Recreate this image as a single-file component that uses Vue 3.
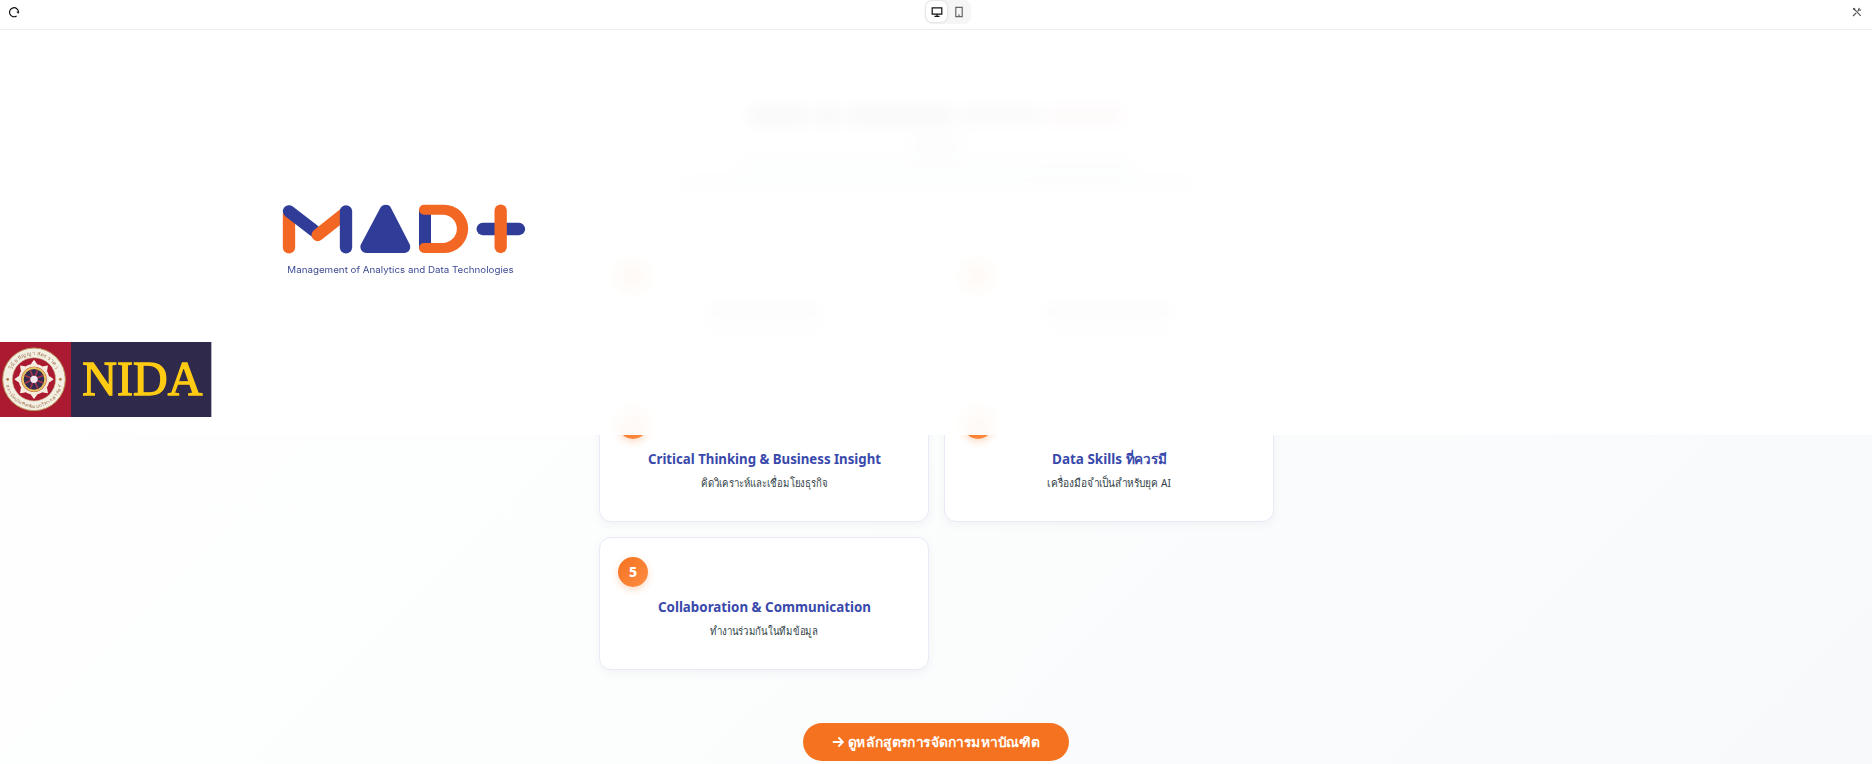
<script setup>
const cards = [
  { n: 1, bars: [120, 118] },
  { n: 2, bars: [136, 124] },
  { n: 3, title: 'Critical Thinking & Business Insight', tw: 233, sub: 'คิดวิเคราะห์และเชื่อมโยงธุรกิจ', sw: 127 },
  { n: 4, title: 'Data Skills ที่ควรมี', tw: 115, sub: 'เครื่องมือจำเป็นสำหรับยุค AI', sw: 124 },
  { n: 5, title: 'Collaboration & Communication', tw: 213, sub: 'ทำงานร่วมกันในทีมข้อมูล', sw: 108 },
]
const spokes = [0, 45, 90, 135, 180, 225, 270, 315]
</script>

<template>
  <div class="page">
    <header class="toolbar">
      <svg class="reload" width="12" height="12" viewBox="0 0 12 12">
        <path d="M8.6 9.9A4.5 4.5 0 1 1 10.5 6.2" />
        <path class="tip" d="M8.2 5.8h3.2l-1 2z" />
      </svg>
      <div class="switch">
        <span class="seg active">
          <svg width="12" height="12" viewBox="0 0 12 12">
            <path d="M1.2 1.8h9.6v6.4H1.2zM6 8.2v2M3.5 10.4h5" />
          </svg>
        </span>
        <span class="seg phone">
          <svg width="12" height="12" viewBox="0 0 12 12">
            <path d="M2.8 1.3h6.4v9.4H2.8zM5.2 9.1h1.6" />
          </svg>
        </span>
      </div>
      <svg class="tools" width="10" height="10" viewBox="0 0 10 10">
        <path d="M1.3 1.2 8.7 8.8M1 9 4.2 5.8M5.7 4.2 7.4 2.6M7.2.9 6.7 2.8 9 3.1" />
        <path class="head" d="M.7 2.1 2.1.8 3.5 2.1 2.3 3.4z" />
      </svg>
    </header>

    <main class="section">
      <div class="intro">
        <div class="headline"><i class="w1"></i><i class="w2"></i><i class="w3"></i><i class="w4"></i><i class="w5"></i></div>
        <i class="line l1"></i>
        <i class="line l2"></i>
        <i class="line l3"></i>
      </div>
      <div class="grid">
        <article v-for="c in cards" :key="c.n" class="card">
          <span class="badge">{{ c.n }}</span>
          <template v-if="c.title">
            <svg class="title" :width="c.tw" height="24"><text x="0" y="17" :textLength="c.tw" lengthAdjust="spacingAndGlyphs">{{ c.title }}</text></svg>
            <svg class="sub" :width="c.sw" height="22"><text x="0" y="16" :textLength="c.sw" lengthAdjust="spacingAndGlyphs">{{ c.sub }}</text></svg>
          </template>
          <template v-else>
            <i class="bar strong" :style="{ width: c.bars[0] + 'px' }"></i>
            <i class="bar" :style="{ width: c.bars[1] + 'px' }"></i>
          </template>
        </article>
      </div>
      <a class="cta">
        <svg width="12" height="12" viewBox="0 0 12 12"><path d="M.8 6h10M6.4 1.5 10.9 6 6.4 10.5" /></svg>
        <svg class="label" width="191" height="26"><text x="0" y="18" textLength="191" lengthAdjust="spacingAndGlyphs">ดูหลักสูตรการจัดการมหาบัณฑิต</text></svg>
      </a>
    </main>

    <div class="veil">
      <svg class="mad" width="290" height="100" viewBox="0 0 870 300">
        <g fill="none" stroke-width="37" stroke-linecap="round">
          <path stroke="#f26724" d="M87 172V72" />
          <path stroke="#2f3c98" d="M87 64 162 122" />
          <path stroke="#f26724" d="M173 135 250 74" />
          <path stroke="#2f3c98" d="M258 172V64" />
          <path stroke="#2f3c98" d="M668 117H777" />
          <path stroke="#f26724" d="M722 62V171" />
        </g>
        <path d="M377 62 433 171H319z" fill="#2f3c98" stroke="#2f3c98" stroke-width="36" stroke-linejoin="round" />
        <path d="M477 60h36v115h-36z" fill="#2f3c98" />
        <path d="M492 44H552A72.500 72.500 0 0 1 552 189H492A15 15 0 0 1 492 159H548A42.500 42.500 0 0 0 548 74H492A15 15 0 0 1 492 44z" fill="#f26724" />
        <text x="82" y="249" textLength="679" lengthAdjust="spacingAndGlyphs">Management of Analytics and Data Technologies</text>
      </svg>
      <svg class="nida" width="212" height="75" viewBox="0 0 636 225">
        <path d="M0 0h214v225H0z" fill="#ab1a31" />
        <path d="M213 0h420v225H213z" fill="#2f2a4b" />
        <path d="M633 0h3v225h-3z" fill="#b9b7c4" />
        <circle cx="102" cy="112" r="94" fill="#f4efe3" stroke="#b9935a" stroke-width="3" />
        <circle cx="102" cy="112" r="65" fill="#ab1a31" stroke="#cdb58c" stroke-width="2" />
        <g v-for="a in spokes" :key="a" :transform="`rotate(${a} 102 112)`">
          <path d="M95 80 93 65 102 53 111 65 109 80z" fill="#f6eee2" />
        </g>
        <circle cx="102" cy="112" r="42" fill="#a12637" stroke="#f5eadb" stroke-width="8" />
        <circle cx="102" cy="112" r="34" fill="#332c50" stroke="#e9c45d" stroke-width="6" />
        <path v-for="a in spokes" :key="'r' + a" :transform="`rotate(${a + 22} 102 112)`" d="M102 112V82" stroke="#a7364a" stroke-width="5" />
        <circle cx="102" cy="112" r="11" fill="#f5e8ee" />
        <circle cx="23" cy="112" r="4" fill="#a77a43" />
        <circle cx="181" cy="112" r="4" fill="#a77a43" />
        <path id="arc-top" d="M30 112A72 72 0 0 1 174 112" fill="none" />
        <path id="arc-bottom" d="M17 112A85 85 0 0 0 187 112" fill="none" />
        <text class="seal"><textPath href="#arc-top" startOffset="30" textLength="165">วินัย ปัญญา สตร ราคา</textPath></text>
        <text class="seal small"><textPath href="#arc-bottom" startOffset="18" textLength="230">สถาบันบัณฑิตพัฒนบริหารศาสตร์</textPath></text>
        <text class="word" x="247" y="158" textLength="360" lengthAdjust="spacingAndGlyphs">NIDA</text>
      </svg>
    </div>
  </div>
</template>

<style>
html, body { margin: 0; overflow: hidden; background: #fff; }
</style>

<style scoped>
.page { position: relative; width: 1872px; height: 764px; overflow: hidden; font-family: "Noto Sans", "Liberation Sans", sans-serif; }
.toolbar { box-sizing: border-box; height: 30px; border-bottom: 1px solid #eee; background: #fff; display: grid; grid-template-columns: 1fr auto 1fr; align-items: start; }
.toolbar svg { display: block; fill: none; stroke: #111; stroke-width: 1.2; }
.toolbar .reload { margin: 6px 0 0 8px; }
.toolbar .tip { fill: #111; stroke: none; }
.toolbar .tools { justify-self: end; margin: 7px 10px 0 0; stroke: #555; stroke-width: 1.2; }
.toolbar .head { fill: #555; stroke: none; }
.switch { display: flex; height: 24px; width: 46px; border-radius: 7px; background: #f6f6f6; margin-left: 24px; }
.seg { width: 22px; height: 22px; display: grid; place-items: center; }
.seg.active { margin: 1px 0 0 1px; width: 21px; height: 21px; border-radius: 6px; background: #fff; box-shadow: 0 0 3px rgba(0,0,0,.17); }
.seg.phone { width: 24px; height: 24px; }
.seg.phone svg { stroke: #666; }

.section { height: 734px; box-sizing: border-box; padding-top: 70px; background: linear-gradient(135deg, #fff 0%, #fcfdfd 50%, #f7f9fb 100%); display: flex; flex-direction: column; align-items: center; }
.intro { height: 141px; display: flex; flex-direction: column; align-items: center; }
.headline { display: flex; gap: 7px; height: 17px; margin: 7px 0 14px; }
.headline i { height: 17px; background: #30363d; border-radius: 4px; opacity: .75; }
.headline .w1 { width: 60px; }
.headline .w2 { width: 26px; }
.headline .w3 { width: 106px; }
.headline .w4 { width: 80px; background: #795552; opacity: .65; }
.headline .w5 { width: 76px; background: #d66e60; }
.line { display: block; flex: none; height: 10px; background: #70777c; opacity: .6; margin-bottom: 10px; }
.l1 { width: 56px; }
.l2 { width: 400px; opacity: .5; }
.l3 { width: 510px; opacity: .5; }
.grid { width: 675px; margin-left: 1px; display: grid; grid-template-columns: 1fr 1fr; grid-auto-rows: 133px; gap: 15px; }
.card { box-sizing: border-box; position: relative; background: #fff; border: 1px solid #e9e9f7; border-radius: 12px; box-shadow: 0 3px 10px rgba(40,50,100,.05); padding-top: 57px; display: flex; flex-direction: column; align-items: center; }
.badge { position: absolute; left: 18px; top: 19px; width: 30px; height: 30px; border-radius: 50%; background: linear-gradient(135deg, #f47321, #ff8c42); color: #fff; font-weight: 800; font-size: 14px; line-height: 29px; text-align: center; box-shadow: 0 3px 7px rgba(244,115,33,.25); }
.card svg { overflow: visible; display: block; }
.title text { font-size: 14px; font-weight: 700; fill: #3949ab; }
.sub text { font-size: 11.5px; fill: #333f48; }
.bar { height: 8px; background: #70777c; opacity: .4; margin-top: 11px; }
.bar.strong { height: 12px; background: #4d526f; opacity: .45; margin-top: 6px; }
.cta { box-sizing: border-box; width: 266px; height: 38px; margin-top: 53px; flex: none; border-radius: 19px; background: #f57320; display: flex; align-items: center; justify-content: center; gap: 4px; }
.cta svg { fill: none; stroke: #fff; stroke-width: 1.8; overflow: visible; margin-left: -1px; }
.cta .label { stroke: none; margin: 0; }
.cta text { fill: #fff; font-size: 13px; font-weight: 700; }

.veil { position: absolute; left: 0; top: 30px; width: 1872px; height: 405px; background: rgba(255,255,255,.95); backdrop-filter: blur(8px); }
.veil svg { position: absolute; overflow: visible; }
.mad { left: 260px; top: 160px; }
.mad text { font: 400 26px Inter, "Liberation Sans", sans-serif; fill: #3f4c93; }
.nida { left: 0; top: 312px; }
.word { font: 400 146px "Liberation Serif", serif; fill: #ffcb13; stroke: #ffcb13; stroke-width: 4; }
.seal { font-size: 16px; fill: #9b7350; }
.seal.small { font-size: 14px; }
</style>
